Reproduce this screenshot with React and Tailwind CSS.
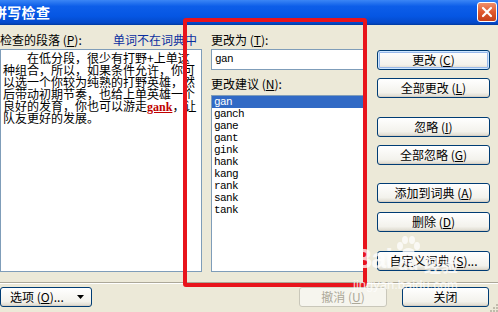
import React from "react";

const CJK = { fontFamily: '"Noto Sans CJK SC", "Noto Sans", sans-serif' };
const MONO = { fontFamily: '"Liberation Mono", "DejaVu Sans Mono", monospace' };

function Btn({ children, className = "", def = false, disabled = false }) {
  const base = disabled
    ? "border-[#c9c7ba] text-[#aca899] bg-[#f6f5ee]"
    : "border-[#003c74] text-black bg-[linear-gradient(to_bottom,#ffffff,#f3f2ec_75%,#dcd8cc)]";
  const shadow = def
    ? "shadow-[inset_0_0_0_1px_#cee7ff,inset_0_0_0_2px_#98b8ea]"
    : disabled
    ? ""
    : "shadow-[inset_0_-1px_0_#d6d0c5]";
  return (
    <div
      className={`h-[20px] rounded-[3px] border flex items-center justify-center text-[12px] leading-none ${base} ${shadow} ${className}`}
      style={CJK}
    >
      {children}
    </div>
  );
}

const U = ({ children }) => <span className="underline underline-offset-1">{children}</span>;

export default function App() {
  const lines = [
    <>　　在低分段，很少有打野+上单这</>,
    <>种组合，所以，如果条件允许，你可</>,
    <>以选一个你较为纯熟的打野英雄，然</>,
    <>后带动初期节奏，也给上单英雄一个</>,
    <>
      良好的发育，你也可以游走
      <span
        className="text-[#c00000] font-bold underline underline-offset-1"
        style={{ fontFamily: '"Liberation Serif", serif' }}
      >
        gank
      </span>
      ，让
    </>,
    <>队友更好的发展。</>,
  ];
  const items = ["gan", "ganch", "gane", "gant", "gink", "hank", "kang", "rank", "sank", "tank"];

  return (
    <div className="relative w-[498px] h-[312px] overflow-hidden bg-[#ece9d8] flex flex-col" style={CJK}>
      {/* Title bar */}
      <div className="h-[25px] shrink-0 flex items-center bg-[linear-gradient(to_bottom,#3b86f5_0%,#0d5ee9_25%,#0556e3_65%,#0449c9_92%,#003a9e_100%)]">
        <span className="ml-[-7px] text-white font-bold text-[14px] tracking-[0.3px] leading-none mt-[-2px]">拼写检查</span>
        <div className="ml-auto mr-[1px] mt-[-1px] w-[20px] h-[20px] rounded-[3px] border border-white bg-[linear-gradient(to_bottom,#f0906c,#e0582e_50%,#c4401a)] flex items-center justify-center">
          <svg width="12" height="12" viewBox="0 0 12 12">
            <path d="M2 2 L10 10 M10 2 L2 10" stroke="white" strokeWidth="2.2" strokeLinecap="round" />
          </svg>
        </div>
      </div>

      {/* Main area */}
      <div className="flex h-[247px] shrink-0">
        {/* Left column */}
        <div className="w-[202px] flex flex-col">
          <div className="h-[24px] pt-[6px] flex items-center justify-between pr-[5px] text-[12px]">
            <span>
              检查的段落 (<U>P</U>):
            </span>
            <span className="text-[#0b2fa0]">单词不在词典中</span>
          </div>
          <div className="h-[223px] border border-[#7f9db9] bg-white pt-[2px] pl-[2px] text-[12px] leading-[12px] text-black">
            {lines.map((l, i) => (
              <div key={i} className="whitespace-nowrap h-[12px]">
                {l}
              </div>
            ))}
          </div>
        </div>

        {/* Middle column */}
        <div className="ml-[9px] w-[154px] flex flex-col">
          <div className="h-[24px] pt-[6px] flex items-center text-[12px]">
            更改为 (<U>T</U>):
          </div>
          <div className="h-[21px] border border-[#7f9db9] bg-white flex items-center pl-[3px] text-[11px] tracking-[-0.6px]" style={MONO}>
            gan
          </div>
          <div className="h-[25px] pt-[3px] flex items-center text-[12px]">
            更改建议 (<U>N</U>):
          </div>
          <div className="h-[177px] border border-[#7f9db9] bg-white text-[11px] leading-[12px] tracking-[-0.6px]" style={MONO}>
            {items.map((it, i) => (
              <div
                key={it}
                className={`h-[12px] pl-[2px] ${i === 0 ? "bg-[#316ac5] text-white" : "text-black"}`}
              >
                {it}
              </div>
            ))}
          </div>
        </div>

        {/* Right column */}
        <div className="ml-[12px] w-[113px] flex flex-col pt-[25px]">
          <Btn def>
            更改 (<U>C</U>)
          </Btn>
          <Btn className="mt-[8px]">
            全部更改 (<U>L</U>)
          </Btn>
          <Btn className="mt-[19px]">
            忽略 (<U>I</U>)
          </Btn>
          <Btn className="mt-[8px]">
            全部忽略 (<U>G</U>)
          </Btn>
          <Btn className="mt-[18px]">
            添加到词典 (<U>A</U>)
          </Btn>
          <Btn className="mt-[9px]">
            删除 (<U>D</U>)
          </Btn>
          <Btn className="mt-[19px]">
            自定义词典 (<U>S</U>)...
          </Btn>
        </div>
      </div>

      {/* Separator */}
      <div className="mt-[10px] h-[2px] shrink-0 border-t border-[#aca899] border-b border-b-white" />

      {/* Bottom row */}
      <div className="mt-[3px] flex">
        <Btn className="w-[92px] !justify-between pl-[9px] pr-[7px]">
          <span>
            选项 (<U>O</U>)...
          </span>
          <svg width="7" height="4" viewBox="0 0 7 4">
            <path d="M0 0 H7 L3.5 4 Z" fill="black" />
          </svg>
        </Btn>
        <Btn disabled className="ml-[207px] w-[88px]">
          撤消 (<U>U</U>)
        </Btn>
        <Btn className="ml-[15px] w-[87px]">关闭</Btn>
      </div>

      {/* Resize grip */}
      <svg className="absolute right-0 bottom-0" width="10" height="10" viewBox="0 0 10 10">
        {[
          [8, 2], [8, 5], [5, 5], [8, 8], [5, 8], [2, 8],
        ].map(([x, y], i) => (
          <rect key={i} x={x} y={y} width="2" height="2" fill="#c0bcac" />
        ))}
      </svg>

      {/* Red annotation frame */}
      <div className="absolute left-[183px] top-[18px] w-[184px] h-[269px] border-[4px] border-[#e8141c] rounded-[3px] pointer-events-none" />

      {/* Watermark */}
      <div className="absolute left-[353px] top-[236px] pointer-events-none text-white opacity-75">
        <div className="flex items-end">
          <span className="text-[27px] font-bold leading-none tracking-[-1px]" style={{ fontFamily: '"Liberation Sans", sans-serif' }}>
            Bai
          </span>
          <div className="flex flex-col items-center ml-[2px]">
            <svg width="28" height="20" viewBox="0 0 28 20">
              <ellipse cx="6" cy="10" rx="3" ry="4" fill="white" />
              <ellipse cx="11" cy="4" rx="3" ry="4" fill="white" />
              <ellipse cx="18" cy="4" rx="3" ry="4" fill="white" />
              <ellipse cx="23" cy="10" rx="3" ry="4" fill="white" />
              <ellipse cx="14.5" cy="16" rx="6" ry="4" fill="white" />
            </svg>
            <span className="text-[17px] font-bold leading-none" style={{ fontFamily: '"Liberation Sans", sans-serif' }}>
              du
            </span>
          </div>
          <span className="text-[17px] font-bold leading-none ml-[2px]">经验</span>
        </div>
        <div className="text-[13px] leading-none mt-[5px]" style={{ fontFamily: '"Liberation Sans", sans-serif' }}>
          jingyan.baidu.com
        </div>
      </div>
    </div>
  );
}
